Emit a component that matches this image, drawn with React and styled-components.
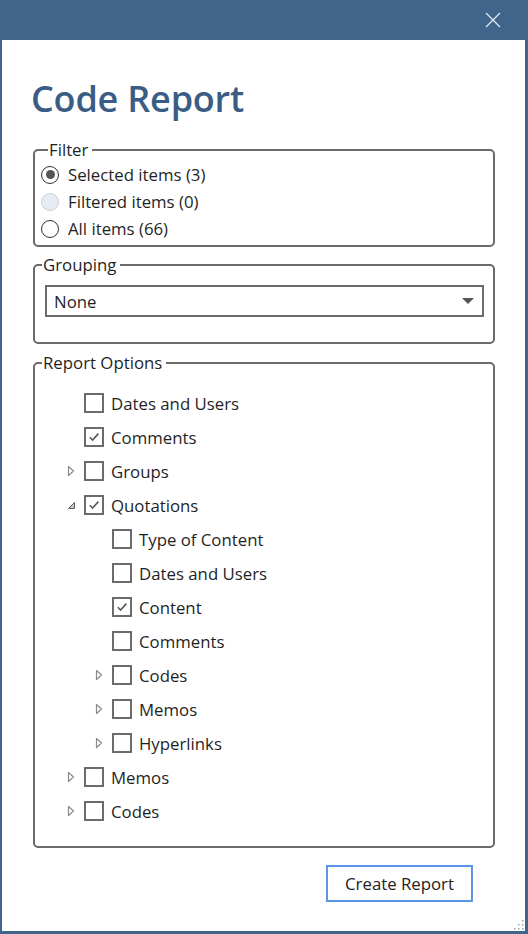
import React from "react";
import styled, { createGlobalStyle } from "styled-components";

const GlobalStyle = createGlobalStyle`
  html, body {
    margin: 0;
    padding: 0;
    background: #41648b;
  }
  * {
    box-sizing: border-box;
  }
`;

const FONT = `"Open Sans", "Noto Sans", "Liberation Sans", sans-serif`;
const TEXT_SIZE = "16.8px";

const Window = styled.div`
  width: 528px;
  height: 934px;
  display: flex;
  flex-direction: column;
  background: #41648b;
  padding: 0 3px 3px 2px;
  font-family: ${FONT};
  color: #1f1f1f;
  position: relative;
`;

const TitleBar = styled.div`
  height: 40px;
  display: flex;
  align-items: center;
  justify-content: flex-end;
  padding-right: 22px;
`;

const CloseButton = styled.button`
  width: 20px;
  height: 20px;
  border: 0;
  padding: 0;
  background: transparent;
  display: flex;
  align-items: center;
  justify-content: center;
  cursor: pointer;
`;

const Body = styled.div`
  flex: 1;
  background: #fff;
  padding: 0 30px 0 31px;
  display: flex;
  flex-direction: column;
`;

const Title = styled.h1`
  margin: 35px 0 17px -2px;
  font-size: 36px;
  line-height: 48px;
  font-weight: 600;
  color: #3a5d86;
  letter-spacing: -0.2px;
`;

const Group = styled.fieldset`
  margin: ${(p) => p.$mt || 0}px 0 0 0;
  border: 2px solid #6b6b6b;
  border-radius: 5px;
  padding: ${(p) => p.$pad};
  min-width: 0;
`;

const Legend = styled.legend`
  font-size: ${TEXT_SIZE};
  line-height: 20px;
  padding: 0 4px 0 1px;
  margin-left: 7px;
  color: #1f1f1f;
`;

const RadioRow = styled.label`
  display: flex;
  align-items: center;
  height: 27px;
  font-size: ${TEXT_SIZE};
  gap: 9px;
`;

const RadioCircle = styled.span`
  width: 18px;
  height: 18px;
  border-radius: 50%;
  border: 1.5px solid ${(p) => (p.$disabled ? "#c9d0d8" : "#333")};
  background: ${(p) => (p.$disabled ? "#e6ecf3" : "#fff")};
  display: flex;
  align-items: center;
  justify-content: center;

  &::after {
    content: "";
    display: ${(p) => (p.$checked ? "block" : "none")};
    width: 9px;
    height: 9px;
    border-radius: 50%;
    background: #555;
  }
`;

const Select = styled.div`
  height: 32px;
  margin: 10px 9px 0 10px;
  border: 2px solid #6b6b6b;
  display: flex;
  align-items: center;
  justify-content: space-between;
  padding: 0 8px 0 7px;
  font-size: ${TEXT_SIZE};
`;

const TreeRow = styled.div`
  display: flex;
  align-items: center;
  height: 34px;
  padding-left: ${(p) => 29 + p.$level * 28}px;
  font-size: ${TEXT_SIZE};
`;

const Expander = styled.span`
  width: 20px;
  height: 20px;
  display: flex;
  align-items: center;
  justify-content: flex-start;
  padding-left: 3px;
`;

const Box = styled.span`
  width: 20px;
  height: 20px;
  border: 2px solid #6b6b6b;
  background: #fff;
  display: flex;
  align-items: center;
  justify-content: center;
  margin-right: 7px;
`;

const Footer = styled.div`
  display: flex;
  justify-content: flex-end;
  padding: 17px 22px 0 0;
`;

const Button = styled.button`
  width: 147px;
  height: 37px;
  border: 2px solid #5b95e6;
  background: #fff;
  font-family: ${FONT};
  font-size: ${TEXT_SIZE};
  color: #222;
  cursor: pointer;
`;

const Grip = styled.svg`
  position: absolute;
  right: 4px;
  bottom: 4px;
`;

function Radio({ checked, disabled, children }) {
  return (
    <RadioRow>
      <RadioCircle $checked={checked} $disabled={disabled} />
      {children}
    </RadioRow>
  );
}

function Arrow({ open }) {
  if (open) {
    return (
      <svg width="9" height="9" viewBox="0 0 9 9">
        <path d="M7.5 1.5 L7.5 7.5 L1.5 7.5 Z" fill="#c4c9d0" stroke="#5a5a5a" strokeWidth="1" strokeLinejoin="round" />
      </svg>
    );
  }
  return (
    <svg width="8" height="12" viewBox="0 0 8 12">
      <path d="M1.5 1.5 L6.5 6 L1.5 10.5 Z" fill="none" stroke="#8a8a8a" strokeWidth="1.2" strokeLinejoin="round" />
    </svg>
  );
}

function Check() {
  return (
    <svg width="12" height="12" viewBox="0 0 12 12">
      <path d="M1.8 6.3 L4.6 9.1 L10.4 2.6" fill="none" stroke="#5a5a5a" strokeWidth="1.6" />
    </svg>
  );
}

const tree = [
  { label: "Dates and Users", level: 1 },
  { label: "Comments", level: 1, checked: true },
  { label: "Groups", level: 1, expander: "closed" },
  { label: "Quotations", level: 1, checked: true, expander: "open" },
  { label: "Type of Content", level: 2 },
  { label: "Dates and Users", level: 2 },
  { label: "Content", level: 2, checked: true },
  { label: "Comments", level: 2 },
  { label: "Codes", level: 2, expander: "closed" },
  { label: "Memos", level: 2, expander: "closed" },
  { label: "Hyperlinks", level: 2, expander: "closed" },
  { label: "Memos", level: 1, expander: "closed" },
  { label: "Codes", level: 1, expander: "closed" },
];

export default function App() {
  return (
    <>
      <GlobalStyle />
      <Window>
        <TitleBar>
          <CloseButton aria-label="Close">
            <svg width="16" height="16" viewBox="0 0 16 16">
              <path d="M1 1 L15 15 M15 1 L1 15" stroke="#e4ebf3" strokeWidth="1.2" />
            </svg>
          </CloseButton>
        </TitleBar>
        <Body>
          <Title>Code Report</Title>

          <Group $pad="1px 0 3px 6px">
            <Legend>Filter</Legend>
            <Radio checked>Selected items (3)</Radio>
            <Radio disabled>Filtered items (0)</Radio>
            <Radio>All items (66)</Radio>
          </Group>

          <Group $mt={8} $pad="0 0 25px 0">
            <Legend>Grouping</Legend>
            <Select>
              None
              <svg width="12" height="7" viewBox="0 0 12 7">
                <path d="M0 0 L12 0 L6 6 Z" fill="#555" />
              </svg>
            </Select>
          </Group>

          <Group $mt={9} $pad="13px 0 18px 0">
            <Legend>Report Options</Legend>
            {tree.map((item, i) => (
              <TreeRow key={i} $level={item.level - 1}>
                <Expander>{item.expander && <Arrow open={item.expander === "open"} />}</Expander>
                <Box>{item.checked && <Check />}</Box>
                {item.label}
              </TreeRow>
            ))}
          </Group>

          <Footer>
            <Button>Create Report</Button>
          </Footer>
        </Body>
        <Grip width="12" height="12" viewBox="0 0 12 12">
          {[[10, 2], [10, 6], [6, 6], [10, 10], [6, 10], [2, 10]].map(([x, y], i) => (
            <rect key={i} x={x} y={y} width="1.5" height="1.5" fill="#9aa3ad" />
          ))}
        </Grip>
      </Window>
    </>
  );
}
